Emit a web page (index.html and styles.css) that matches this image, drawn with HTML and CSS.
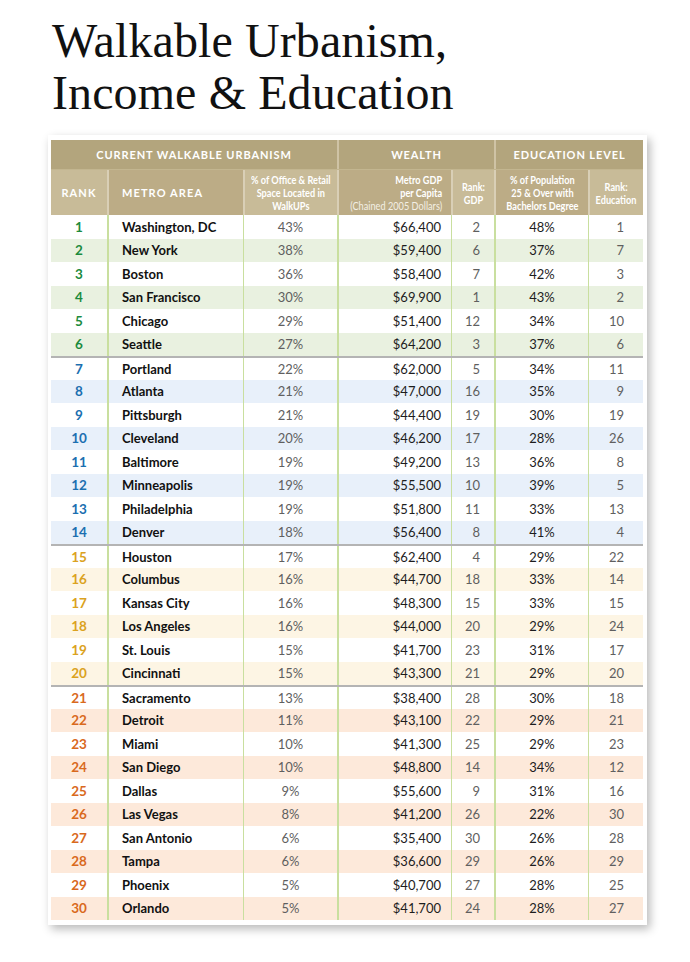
FILE: index.html
```html
<!DOCTYPE html>
<html lang="en">
<head>
<meta charset="utf-8">
<title>Walkable Urbanism, Income &amp; Education</title>
<link rel="stylesheet" href="styles.css">
</head>
<body>
<h1 class="title">Walkable Urbanism,<br>Income &amp; Education</h1>
<div class="card">
  <div class="table">
    <div class="hrow1">
      <div class="h1c span3">CURRENT WALKABLE URBANISM</div>
      <div class="h1c span2 gl">WEALTH</div>
      <div class="h1c span2 gl">EDUCATION LEVEL</div>
    </div>
    <div class="hrow2">
      <div class="h2c light caps center">RANK</div>
      <div class="h2c dark caps left bl">METRO AREA</div>
      <div class="h2c light center bl"><div class="cond">% of Office &amp; Retail<br>Space Located in<br>WalkUPs</div></div>
      <div class="h2c dark right bl"><div class="cond">Metro GDP<br>per Capita<br><span class="thin">(Chained 2005 Dollars)</span></div></div>
      <div class="h2c light center bl"><div class="cond">Rank:<br>GDP</div></div>
      <div class="h2c dark center bl"><div class="cond">% of Population<br>25 &amp; Over with<br>Bachelors Degree</div></div>
      <div class="h2c light center bl"><div class="cond">Rank:<br>Education</div></div>
    </div>

    <div class="row green"><span class="c rk">1</span><span class="c city">Washington, DC</span><span class="c pct">43%</span><span class="c gdp">$66,400</span><span class="c rg">2</span><span class="c edu">48%</span><span class="c re">1</span></div>
    <div class="row green alt"><span class="c rk">2</span><span class="c city">New York</span><span class="c pct">38%</span><span class="c gdp">$59,400</span><span class="c rg">6</span><span class="c edu">37%</span><span class="c re">7</span></div>
    <div class="row green"><span class="c rk">3</span><span class="c city">Boston</span><span class="c pct">36%</span><span class="c gdp">$58,400</span><span class="c rg">7</span><span class="c edu">42%</span><span class="c re">3</span></div>
    <div class="row green alt"><span class="c rk">4</span><span class="c city">San Francisco</span><span class="c pct">30%</span><span class="c gdp">$69,900</span><span class="c rg">1</span><span class="c edu">43%</span><span class="c re">2</span></div>
    <div class="row green"><span class="c rk">5</span><span class="c city">Chicago</span><span class="c pct">29%</span><span class="c gdp">$51,400</span><span class="c rg">12</span><span class="c edu">34%</span><span class="c re">10</span></div>
    <div class="row green alt"><span class="c rk">6</span><span class="c city">Seattle</span><span class="c pct">27%</span><span class="c gdp">$64,200</span><span class="c rg">3</span><span class="c edu">37%</span><span class="c re">6</span></div>

    <div class="row blue sep"><span class="c rk">7</span><span class="c city">Portland</span><span class="c pct">22%</span><span class="c gdp">$62,000</span><span class="c rg">5</span><span class="c edu">34%</span><span class="c re">11</span></div>
    <div class="row blue alt"><span class="c rk">8</span><span class="c city">Atlanta</span><span class="c pct">21%</span><span class="c gdp">$47,000</span><span class="c rg">16</span><span class="c edu">35%</span><span class="c re">9</span></div>
    <div class="row blue"><span class="c rk">9</span><span class="c city">Pittsburgh</span><span class="c pct">21%</span><span class="c gdp">$44,400</span><span class="c rg">19</span><span class="c edu">30%</span><span class="c re">19</span></div>
    <div class="row blue alt"><span class="c rk">10</span><span class="c city">Cleveland</span><span class="c pct">20%</span><span class="c gdp">$46,200</span><span class="c rg">17</span><span class="c edu">28%</span><span class="c re">26</span></div>
    <div class="row blue"><span class="c rk">11</span><span class="c city">Baltimore</span><span class="c pct">19%</span><span class="c gdp">$49,200</span><span class="c rg">13</span><span class="c edu">36%</span><span class="c re">8</span></div>
    <div class="row blue alt"><span class="c rk">12</span><span class="c city">Minneapolis</span><span class="c pct">19%</span><span class="c gdp">$55,500</span><span class="c rg">10</span><span class="c edu">39%</span><span class="c re">5</span></div>
    <div class="row blue"><span class="c rk">13</span><span class="c city">Philadelphia</span><span class="c pct">19%</span><span class="c gdp">$51,800</span><span class="c rg">11</span><span class="c edu">33%</span><span class="c re">13</span></div>
    <div class="row blue alt"><span class="c rk">14</span><span class="c city">Denver</span><span class="c pct">18%</span><span class="c gdp">$56,400</span><span class="c rg">8</span><span class="c edu">41%</span><span class="c re">4</span></div>

    <div class="row gold sep"><span class="c rk">15</span><span class="c city">Houston</span><span class="c pct">17%</span><span class="c gdp">$62,400</span><span class="c rg">4</span><span class="c edu">29%</span><span class="c re">22</span></div>
    <div class="row gold alt"><span class="c rk">16</span><span class="c city">Columbus</span><span class="c pct">16%</span><span class="c gdp">$44,700</span><span class="c rg">18</span><span class="c edu">33%</span><span class="c re">14</span></div>
    <div class="row gold"><span class="c rk">17</span><span class="c city">Kansas City</span><span class="c pct">16%</span><span class="c gdp">$48,300</span><span class="c rg">15</span><span class="c edu">33%</span><span class="c re">15</span></div>
    <div class="row gold alt"><span class="c rk">18</span><span class="c city">Los Angeles</span><span class="c pct">16%</span><span class="c gdp">$44,000</span><span class="c rg">20</span><span class="c edu">29%</span><span class="c re">24</span></div>
    <div class="row gold"><span class="c rk">19</span><span class="c city">St. Louis</span><span class="c pct">15%</span><span class="c gdp">$41,700</span><span class="c rg">23</span><span class="c edu">31%</span><span class="c re">17</span></div>
    <div class="row gold alt"><span class="c rk">20</span><span class="c city">Cincinnati</span><span class="c pct">15%</span><span class="c gdp">$43,300</span><span class="c rg">21</span><span class="c edu">29%</span><span class="c re">20</span></div>

    <div class="row orange sep"><span class="c rk">21</span><span class="c city">Sacramento</span><span class="c pct">13%</span><span class="c gdp">$38,400</span><span class="c rg">28</span><span class="c edu">30%</span><span class="c re">18</span></div>
    <div class="row orange alt"><span class="c rk">22</span><span class="c city">Detroit</span><span class="c pct">11%</span><span class="c gdp">$43,100</span><span class="c rg">22</span><span class="c edu">29%</span><span class="c re">21</span></div>
    <div class="row orange"><span class="c rk">23</span><span class="c city">Miami</span><span class="c pct">10%</span><span class="c gdp">$41,300</span><span class="c rg">25</span><span class="c edu">29%</span><span class="c re">23</span></div>
    <div class="row orange alt"><span class="c rk">24</span><span class="c city">San Diego</span><span class="c pct">10%</span><span class="c gdp">$48,800</span><span class="c rg">14</span><span class="c edu">34%</span><span class="c re">12</span></div>
    <div class="row orange"><span class="c rk">25</span><span class="c city">Dallas</span><span class="c pct">9%</span><span class="c gdp">$55,600</span><span class="c rg">9</span><span class="c edu">31%</span><span class="c re">16</span></div>
    <div class="row orange alt"><span class="c rk">26</span><span class="c city">Las Vegas</span><span class="c pct">8%</span><span class="c gdp">$41,200</span><span class="c rg">26</span><span class="c edu">22%</span><span class="c re">30</span></div>
    <div class="row orange"><span class="c rk">27</span><span class="c city">San Antonio</span><span class="c pct">6%</span><span class="c gdp">$35,400</span><span class="c rg">30</span><span class="c edu">26%</span><span class="c re">28</span></div>
    <div class="row orange alt"><span class="c rk">28</span><span class="c city">Tampa</span><span class="c pct">6%</span><span class="c gdp">$36,600</span><span class="c rg">29</span><span class="c edu">26%</span><span class="c re">29</span></div>
    <div class="row orange"><span class="c rk">29</span><span class="c city">Phoenix</span><span class="c pct">5%</span><span class="c gdp">$40,700</span><span class="c rg">27</span><span class="c edu">28%</span><span class="c re">25</span></div>
    <div class="row orange alt"><span class="c rk">30</span><span class="c city">Orlando</span><span class="c pct">5%</span><span class="c gdp">$41,700</span><span class="c rg">24</span><span class="c edu">28%</span><span class="c re">27</span></div>
  </div>
</div>
</body>
</html>
```

FILE: styles.css
```css
* { box-sizing: border-box; }

html, body {
  margin: 0;
  padding: 0;
  background: #ffffff;
}

body {
  width: 690px;
  height: 962px;
  overflow: hidden;
  font-family: Lato, "Noto Sans", sans-serif;
}

.title {
  margin: 15px 0 0 52px;
  font-family: "Liberation Serif", "DejaVu Serif", serif;
  font-weight: 400;
  font-size: 48px;
  line-height: 52px;
  color: #111;
  letter-spacing: 0.1px;
}

.card {
  margin: 16px 0 0 48px;
  width: 599px;
  padding: 5px 4px 5px 3px;
  background: #fff;
  box-shadow: 3px 4px 9px rgba(0, 0, 0, 0.28);
}

.table {
  --cols: 56px 136px 94px 114px 43px 94px 55px;
  width: 592px;
}

/* header */
.hrow1 {
  display: grid;
  grid-template-columns: var(--cols);
  height: 30px;
  background: #b3a57d;
  border-bottom: 1px solid #c3b690;
}

.h1c {
  display: flex;
  align-items: center;
  justify-content: center;
  color: #fff;
  font-weight: 700;
  font-size: 11px;
  letter-spacing: 0.9px;
}

.span3 { grid-column: span 3; }
.span2 { grid-column: span 2; }
.gl { border-left: 2px solid #cfc3a5; }

.hrow2 {
  display: grid;
  grid-template-columns: var(--cols);
  height: 45px;
}

.h2c {
  display: flex;
  align-items: center;
  color: #fff;
  overflow: visible;
}

.h2c.light { background: #c8bb98; }
.h2c.dark { background: #bcac86; }
.h2c.bl { border-left: 2px solid #d9cfb6; }

.h2c.caps {
  font-weight: 700;
  font-size: 11px;
  letter-spacing: 1.1px;
}

.cond {
  flex: none;
  white-space: nowrap;
  font-weight: 700;
  font-size: 10.8px;
  line-height: 13px;
  transform: scaleX(0.85);
}

.h2c.center { justify-content: center; text-align: center; }
.h2c.center .cond { transform-origin: center; }
.h2c.left { justify-content: flex-start; padding-left: 13px; }
.h2c.right { justify-content: flex-end; text-align: right; padding-right: 9px; }
.h2c.right .cond { transform-origin: right center; }

.thin {
  font-weight: 400;
  color: #f3efe4;
}

/* body rows */
.row {
  display: grid;
  grid-template-columns: var(--cols);
  height: 23.5px;
  background: #fff;
  font-size: 13px;
}

.row.sep { border-top: 2px solid #b4b4b4; }

.row.green.alt { background: #e9f1e0; }
.row.blue.alt { background: #e8f0fa; }
.row.gold.alt { background: #fdf5e4; }
.row.orange.alt { background: #fde9da; }

.c {
  display: flex;
  align-items: center;
  white-space: nowrap;
}

.rk {
  justify-content: center;
  font-weight: 700;
  font-size: 13.5px;
}
.green .rk { color: #1c8b3d; }
.blue .rk { color: #1b6fb0; }
.gold .rk { color: #dba220; }
.orange .rk { color: #d9691d; }

.city {
  padding-left: 13px;
  font-weight: 700;
  color: #111;
  border-left: 2px solid #c9df9f;
}

.pct {
  justify-content: center;
  color: #5f5f5f;
  border-left: 1px solid #c9df9f;
}

.gdp {
  justify-content: flex-end;
  padding-right: 10px;
  color: #1d1d1d;
  border-left: 2px solid #c9df9f;
}

.rg {
  justify-content: flex-end;
  padding-right: 14px;
  color: #5f5f5f;
  border-left: 1px solid #c9df9f;
}

.edu {
  justify-content: center;
  color: #1d1d1d;
  border-left: 2px solid #c9df9f;
}

.re {
  justify-content: flex-end;
  padding-right: 19px;
  color: #5f5f5f;
  border-left: 1px solid #c9df9f;
}
```
